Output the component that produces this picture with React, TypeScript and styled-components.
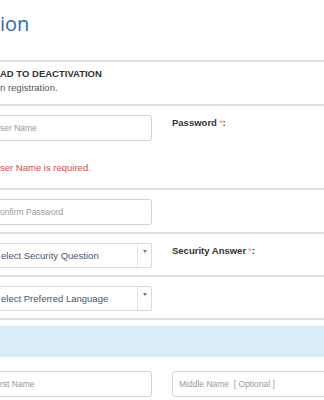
import React from 'react';
import styled, { createGlobalStyle } from 'styled-components';

const GlobalStyle = createGlobalStyle`
  html, body {
    margin: 0;
    padding: 0;
    background: #fff;
    overflow: hidden;
  }
  body {
    font-family: 'Liberation Sans', Arial, sans-serif;
    color: #333;
  }
`;

const Page = styled.div`
  width: 324px;
  height: 400px;
  overflow: hidden;
`;

const Title = styled.h1`
  margin: 0;
  padding-top: 12px;
  height: 60px;
  font-family: 'Open Sans', sans-serif;
  font-weight: 400;
  font-size: 20px;
  line-height: 24px;
  color: #2f6aa8;
  box-sizing: border-box;
`;

const Divider = styled.hr`
  margin: 0;
  border: none;
  border-top: 2px solid #e0e0e0;
`;

const Notice = styled.div`
  padding: 5px 0 9px;
  font-size: 9.5px;
  line-height: 14px;
`;

const NoticeHead = styled.div`
  font-weight: bold;
  color: #333;
`;

const NoticeText = styled.div`
  color: #555;
`;

const Row = styled.div<{ $bottom?: number }>`
  display: grid;
  grid-template-columns: 152px 1fr;
  column-gap: 20px;
  padding: 9px 0 ${({ $bottom }) => $bottom ?? 7}px;
`;

const Col = styled.div`
  display: flex;
  flex-direction: column;
  min-width: 0;
`;

const Field = styled.input<{ $bleed?: boolean }>`
  box-sizing: border-box;
  height: 26px;
  margin: 0 0 0 ${({ $bleed }) => ($bleed ? '-7px' : '0')};
  width: ${({ $bleed }) => ($bleed ? 'calc(100% + 7px)' : '200px')};
  padding: 0 6px;
  border: 1px solid #d2d2d2;
  border-radius: 3px;
  font-family: 'Liberation Sans', Arial, sans-serif;
  font-size: 8.5px;
  outline: none;
  background: #fff;

  &::placeholder {
    color: #9a9a9a;
  }
`;

const Select = styled.div`
  box-sizing: border-box;
  height: 25px;
  margin-left: -7px;
  width: calc(100% + 7px);
  display: flex;
  border: 1px solid #dadada;
  border-radius: 2px;
`;

const SelectText = styled.div`
  flex: 1;
  display: flex;
  align-items: center;
  padding-left: 7px;
  font-size: 9.5px;
  color: #4a5468;
  white-space: nowrap;
  overflow: hidden;
`;

const Caret = styled.div`
  width: 14px;
  border-left: 1px solid #e2e2e2;
  display: flex;
  justify-content: center;
  padding-top: 6px;
  box-sizing: border-box;

  &::after {
    content: '';
    width: 0;
    height: 0;
    border-left: 2.5px solid transparent;
    border-right: 2.5px solid transparent;
    border-top: 3px solid #777;
  }
`;

const Label = styled.div`
  font-size: 9.5px;
  line-height: 15px;
  font-weight: bold;
  color: #333;
`;

const Star = styled.span`
  color: #f09090;
  font-weight: normal;
  margin-left: 2px;
`;

const ErrorText = styled.div`
  margin-top: 20px;
  font-size: 9.5px;
  line-height: 14px;
  color: #e04848;
  white-space: nowrap;
`;

const Band = styled.div`
  margin-top: 6px;
  height: 31px;
  background: #d9edf7;
`;

const NameRow = styled(Row)`
  padding-top: 14px;
`;

const App: React.FC = () => {
  return (
    <Page>
      <GlobalStyle />
      <Title>ion</Title>
      <Divider />
      <Notice>
        <NoticeHead>AD TO DEACTIVATION</NoticeHead>
        <NoticeText>n registration.</NoticeText>
      </Notice>
      <Divider />

      <Row $bottom={13}>
        <Col>
          <Field $bleed placeholder="ser Name" />
          <ErrorText>ser Name is required.</ErrorText>
        </Col>
        <Col>
          <Label>
            Password<Star>*</Star>:
          </Label>
        </Col>
      </Row>
      <Divider />

      <Row>
        <Col>
          <Field $bleed placeholder="onfirm Password" />
        </Col>
        <Col />
      </Row>
      <Divider />

      <Row>
        <Col>
          <Select>
            <SelectText>elect Security Question</SelectText>
            <Caret />
          </Select>
        </Col>
        <Col>
          <Label>
            Security Answer<Star>*</Star>:
          </Label>
        </Col>
      </Row>
      <Divider />

      <Row>
        <Col>
          <Select>
            <SelectText>elect Preferred Language</SelectText>
            <Caret />
          </Select>
        </Col>
        <Col />
      </Row>
      <Divider />

      <Band />

      <NameRow>
        <Col>
          <Field $bleed placeholder="rst Name" />
        </Col>
        <Col>
          <Field placeholder="Middle Name  [ Optional ]" />
        </Col>
      </NameRow>
    </Page>
  );
};

export default App;
